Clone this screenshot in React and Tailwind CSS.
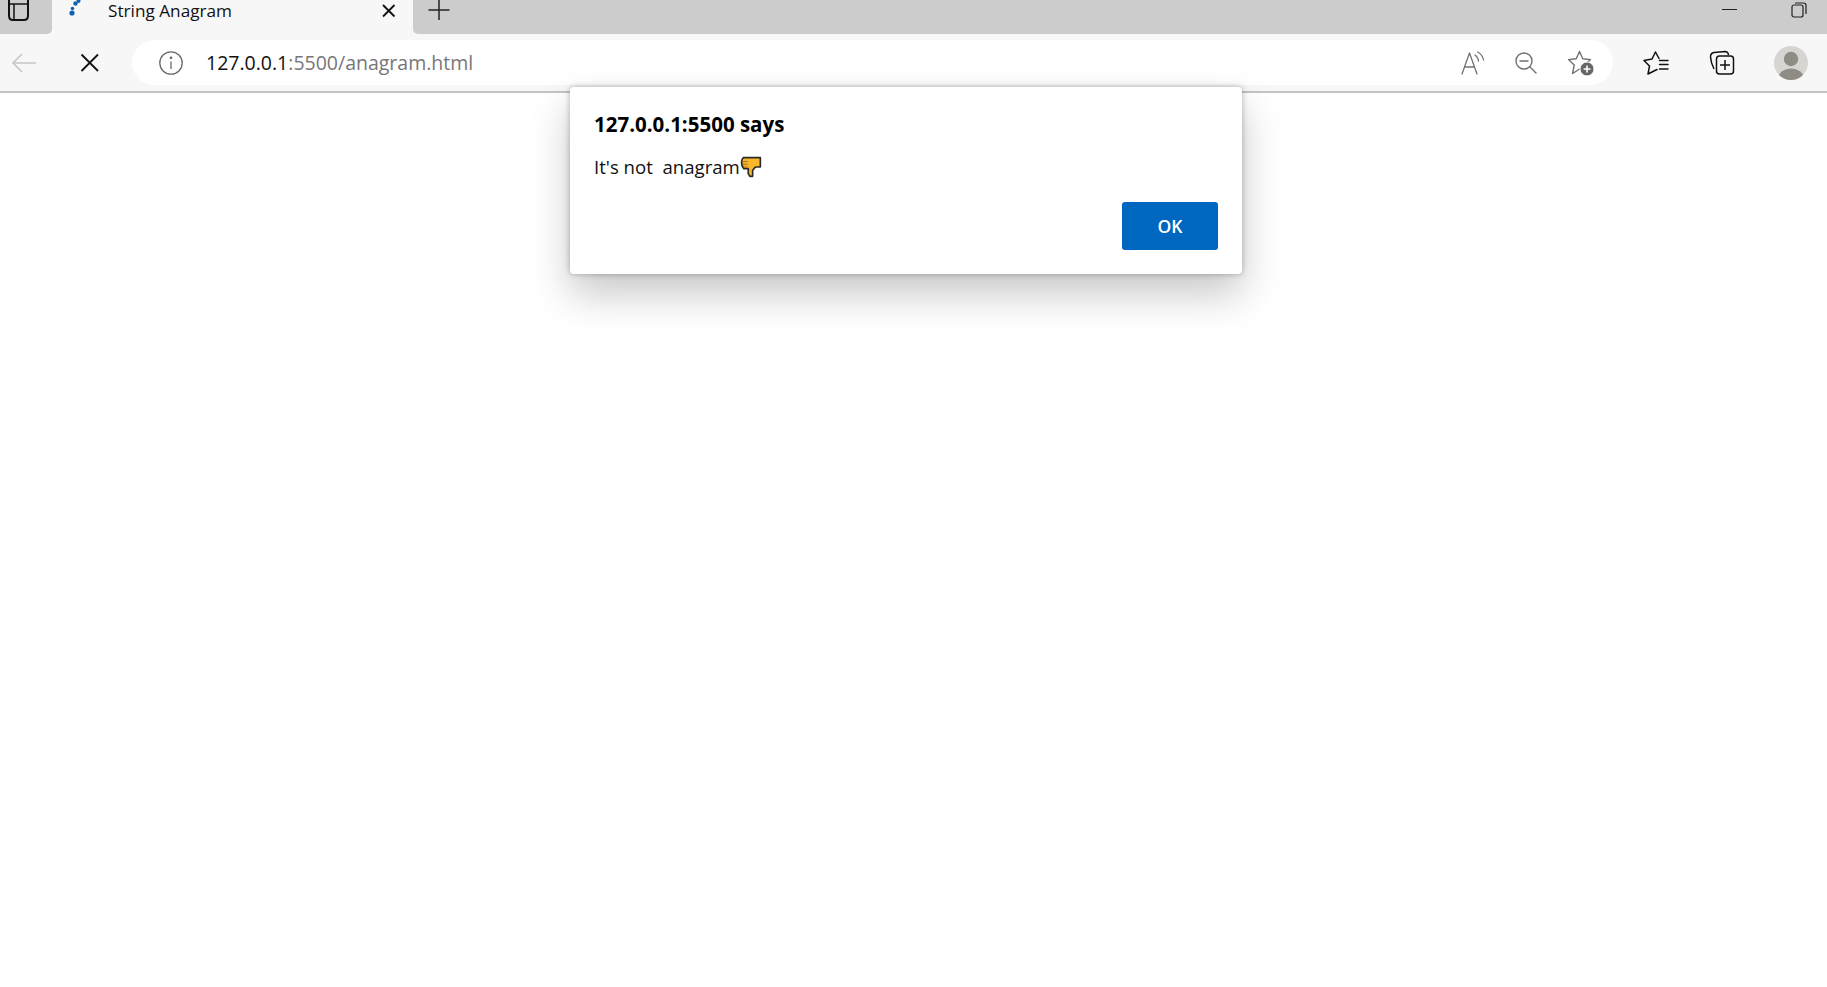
const F = { fontFamily: '"Open Sans", "Noto Sans", sans-serif' };

function Thumb() {
  return (
    <svg width="22" height="22" viewBox="0 0 20 20" className="shrink-0">
      <path d="M3 1.5 H18.5 V10 H14 L11.5 13 V18.5 H9 L7.5 16 V11.5 H3.5 Q1.2 9 1.5 5 Q2 2 3 1.5 Z" fill="#f9b72c" stroke="#2a2a2a" strokeWidth="1.5" strokeLinejoin="round" />
      <path d="M2.5 5 H7 M2.5 7.5 H7 M3 10 H7" stroke="#a8741a" strokeWidth="1" />
    </svg>
  );
}

export default function App() {
  return (
    <div className="relative w-[1827px] h-[987px] bg-white overflow-hidden" style={F}>
      {/* tab strip */}
      <div className="h-[34px] bg-[#f7f7f7] flex items-start">
        <div className="w-[52px] h-[34px] bg-[#cccccc] rounded-br-[5px] pl-[8px] shrink-0">
          <svg width="21" height="21" viewBox="0 0 21 21" fill="none" stroke="#111" strokeWidth="2">
            <path d="M1 0 V15.5 Q1 20 5 20 H16 Q20 20 20 15.5 V0" />
            <path d="M1 4 H20 M6 4 V20" strokeWidth="1.5" />
          </svg>
        </div>
        <div className="w-[361px] h-[34px] flex items-start shrink-0">
          <svg width="16" height="18" viewBox="0 0 16 18" className="ml-[16px] shrink-0" fill="#0f62ad">
            <circle cx="4" cy="13" r="2.6" />
            <circle cx="4.5" cy="8.5" r="1.8" />
            <circle cx="7.5" cy="3.5" r="2.2" />
            <circle cx="10.5" cy="1" r="2" />
          </svg>
          <span className="ml-[24px] text-[17.2px] leading-[21px] text-[#111] whitespace-nowrap w-[273px]">String Anagram</span>
          <svg width="16" height="16" viewBox="0 0 16 16" className="mt-[3px] shrink-0" fill="none" stroke="#111" strokeWidth="1.8">
            <path d="M2 2 L13.5 13.5 M13.5 2 L2 13.5" />
          </svg>
        </div>
        <div className="flex-1 h-[34px] bg-[#cccccc] rounded-bl-[5px] flex items-start">
          <svg width="24" height="24" viewBox="0 0 24 24" className="ml-[14px] shrink-0" fill="none" stroke="#222" strokeWidth="1.5">
            <path d="M12 0 V20 M1.5 10 H22.5" />
          </svg>
          <div className="ml-auto flex items-start">
            <div className="w-[15px] h-px bg-[#222] mt-[9px]" />
            <svg width="16" height="16" viewBox="0 0 16 16" className="ml-[54px] mr-[20px] mt-[2px]" fill="none" stroke="#222" strokeWidth="1.2">
              <rect x="1" y="3" width="11" height="12" rx="2" />
              <path d="M4 1 H12.5 Q15 1 15 3.5 V12" />
            </svg>
          </div>
        </div>
      </div>

      {/* toolbar */}
      <div className="h-[59px] bg-[#f7f7f7] border-b-2 border-[#c4c4c4] flex items-center">
        <svg width="26" height="22" viewBox="0 0 26 22" className="ml-[11px] shrink-0" fill="none" stroke="#c6c6c6" strokeWidth="1.6">
          <path d="M25 11 H2 M11 2 L2 11 L11 20" />
        </svg>
        <svg width="20" height="20" viewBox="0 0 20 20" className="ml-[43px] shrink-0" fill="none" stroke="#111" strokeWidth="1.8">
          <path d="M1.5 1.5 L18 18 M18 1.5 L1.5 18" />
        </svg>
        <div className="ml-[32px] w-[1481px] h-[45px] bg-white rounded-full flex items-center shrink-0">
          <svg width="26" height="26" viewBox="0 0 26 26" className="ml-[26px] shrink-0" fill="none" stroke="#6a6a6a" strokeWidth="1.3">
            <circle cx="13" cy="13" r="11.2" />
            <path d="M13 11.5 V19" />
            <circle cx="13" cy="7.8" r="0.7" fill="#6a6a6a" />
          </svg>
          <span className="ml-[22px] text-[19.5px] leading-[28px] whitespace-nowrap text-[#777]">
            <span className="text-[#111]">127.0.0.1</span>:5500/anagram.html
          </span>
          <div className="ml-auto flex items-center">
            <svg width="24" height="24" viewBox="0 0 24 24" fill="none" stroke="#707070" strokeWidth="1.3" strokeLinecap="round" strokeLinejoin="round">
              <path d="M1 23 L8.5 2 L16 23 M3.5 16 H13.5" />
              <path d="M14 4 Q17 6 17.5 10 M16.5 1 Q21.5 3.5 22.5 9" />
            </svg>
            <svg width="22" height="22" viewBox="0 0 22 22" className="ml-[30px]" fill="none" stroke="#707070" strokeWidth="1.4" strokeLinecap="round">
              <circle cx="9" cy="9" r="8" />
              <path d="M5 9 H13 M15 15 L21 21" />
            </svg>
            <svg width="27" height="26" viewBox="0 0 27 26" className="ml-[30px] mr-[19px]" fill="none" stroke="#707070" strokeWidth="1.4" strokeLinejoin="round">
              <path d="M12.5 1.5 L15.8 8.7 L23.5 9.6 L17.8 15 L19.4 22.8 L12.5 19 L5.6 23.5 L7.2 15 L1.5 9.6 L9.2 8.7 Z" />
              <circle cx="20" cy="19" r="7" fill="#666" stroke="#fff" strokeWidth="1" />
              <path d="M20 15.5 V22.5 M16.5 19 H23.5" stroke="#fff" strokeWidth="1.6" />
            </svg>
          </div>
        </div>
        <svg width="26" height="24" viewBox="0 0 26 24" className="ml-[30px] shrink-0" fill="none" stroke="#111" strokeWidth="1.5" strokeLinejoin="round" strokeLinecap="round">
          <path d="M16 7.5 L12.5 1 L9 8 L1 9.5 L6.5 15 L5 23 L14 18.5" />
          <path d="M16.5 9.5 H25 M16.5 13.5 H25 M16.5 18 H25" />
        </svg>
        <svg width="26" height="26" viewBox="0 0 26 26" className="ml-[40px] shrink-0" fill="none" stroke="#111" strokeWidth="1.5" strokeLinejoin="round">
          <path d="M5 19 Q2 13 1.5 7 Q1.5 3 5 2.5 L16 1.5 Q19 1.5 19.5 5" />
          <rect x="7.5" y="6" width="17" height="18" rx="3" />
          <path d="M16 10 V20 M11 15 H21" />
        </svg>
        <div className="ml-[39px] w-[34px] h-[34px] rounded-full bg-[#d6d5d1] overflow-hidden shrink-0">
          <svg width="34" height="34" viewBox="0 0 34 34" fill="#8f8b85">
            <circle cx="17" cy="13" r="7.2" />
            <ellipse cx="17" cy="32" rx="12.5" ry="9.5" />
          </svg>
        </div>
      </div>

      {/* alert dialog */}
      <div className="absolute left-[570px] top-[87px] w-[672px] h-[187px] bg-white rounded-[4px] shadow-[0_0_6px_rgba(0,0,0,0.28),0_20px_40px_rgba(0,0,0,0.22)] flex flex-col pl-[24px] pr-[24px]">
        <div className="mt-[23px] text-[20.5px] leading-[28px] font-bold text-black whitespace-nowrap">127.0.0.1:5500 says</div>
        <div className="mt-[16px] flex items-center text-[18.6px] leading-[26px] text-[#111] whitespace-pre">
          <span>It's not  anagram</span>
          <Thumb />
        </div>
        <div className="mt-[22px] flex justify-end">
          <div className="w-[96px] h-[48px] rounded-[3px] bg-[#0067c0] text-white text-[17.5px] font-semibold flex items-center justify-center">OK</div>
        </div>
      </div>
    </div>
  );
}
